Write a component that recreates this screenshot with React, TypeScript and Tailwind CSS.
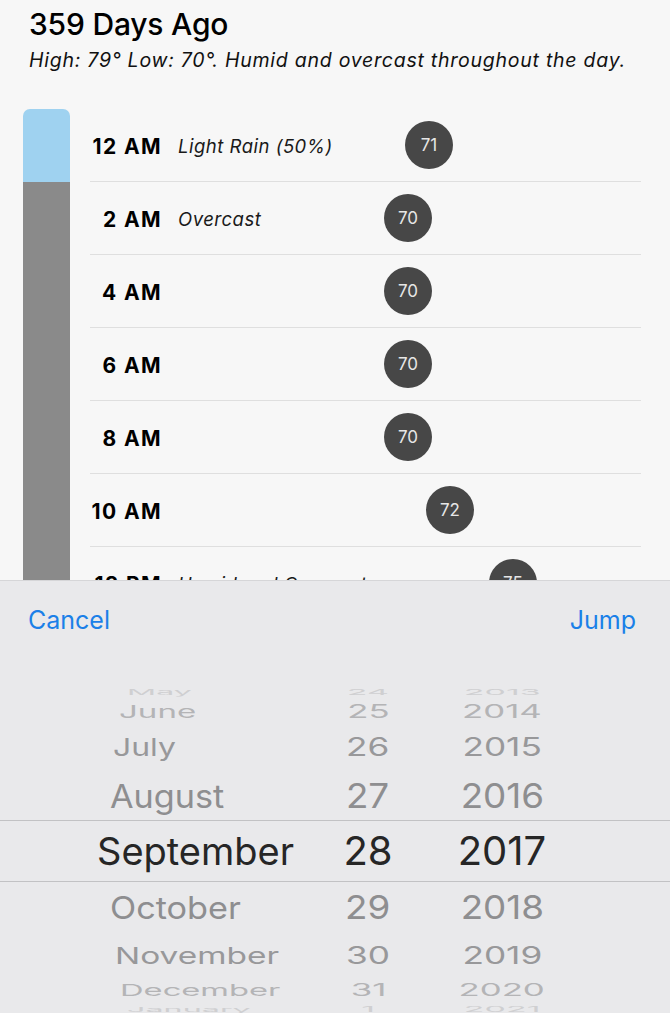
import React from "react";

type Row = { time: string; desc?: string; temp: number };

const rows: Row[] = [
  { time: "12 AM", desc: "Light Rain (50%)", temp: 71 },
  { time: "2 AM", desc: "Overcast", temp: 70 },
  { time: "4 AM", temp: 70 },
  { time: "6 AM", temp: 70 },
  { time: "8 AM", temp: 70 },
  { time: "10 AM", temp: 72 },
  { time: "12 PM", desc: "Humid and Overcast", temp: 75 },
];

type PRow = {
  m: string;
  d: string;
  y: string;
  h: string;
  ml: string;
  tf: string;
  mtf: string;
  color: string;
  sel?: boolean;
};

const picker: PRow[] = [
  { m: "May", d: "24", y: "2013", h: "h-[20px]", ml: "ml-[127px]", tf: "[transform:scale(0.85,0.2)]", mtf: "[transform:scale(0.85,0.2)]", color: "text-[#cfcfd1]" },
  { m: "June", d: "25", y: "2014", h: "h-[20px]", ml: "ml-[119px]", tf: "[transform:scale(0.87,0.45)]", mtf: "[transform:scale(0.87,0.45)]", color: "text-[#b4b4b6]" },
  { m: "July", d: "26", y: "2015", h: "h-[50px]", ml: "ml-[113px]", tf: "[transform:scale(0.88,0.64)]", mtf: "[transform:scale(0.84,0.64)]", color: "text-[#98989a]" },
  { m: "August", d: "27", y: "2016", h: "h-[48px]", ml: "ml-[110px]", tf: "[transform:scale(0.92,0.85)]", mtf: "[transform:scale(0.9,0.85)]", color: "text-[#8e8e90]" },
  { m: "September", d: "28", y: "2017", h: "h-[62px]", ml: "ml-[97px]", tf: "[transform:scale(1,1)]", mtf: "[transform:scale(1,1)]", color: "text-[#262626]", sel: true },
  { m: "October", d: "29", y: "2018", h: "h-[52px]", ml: "ml-[110px]", tf: "[transform:scale(0.92,0.82)]", mtf: "[transform:scale(0.9,0.82)]", color: "text-[#8e8e90]" },
  { m: "November", d: "30", y: "2019", h: "h-[44px]", ml: "ml-[115px]", tf: "[transform:scale(0.88,0.6)]", mtf: "[transform:scale(0.88,0.6)]", color: "text-[#98989a]" },
  { m: "December", d: "31", y: "2020", h: "h-[24px]", ml: "ml-[120px]", tf: "[transform:scale(0.87,0.42)]", mtf: "[transform:scale(0.86,0.42)]", color: "text-[#b4b4b6]" },
  { m: "January", d: "1", y: "2021", h: "h-[14px]", ml: "ml-[127px]", tf: "[transform:scale(0.85,0.18)]", mtf: "[transform:scale(0.85,0.18)]", color: "text-[#cfcfd1]" },
];

export default function App() {
  return (
    <div className="h-[1013px] w-[670px] overflow-hidden bg-[#f7f7f7] text-[#111] [font-family:Inter,'Noto_Sans',sans-serif]">
      {/* Header */}
      <div className="px-[29px]">
        <h1 className="mt-[7px] text-[30px] font-medium leading-[34px] tracking-[-0.2px] text-black">359 Days Ago</h1>
        <p className="mt-[7px] whitespace-nowrap text-[19.5px] italic leading-[24px] tracking-[0.75px] text-[#111]">
          High: 79° Low: 70°. Humid and overcast throughout the day.
        </p>
      </div>

      {/* Hourly list */}
      <div className="mt-[37px] flex h-[471px] overflow-hidden">
        <div className="ml-[23px] flex w-[47px] flex-col overflow-hidden rounded-t-[7px]">
          <div className="h-[73px] bg-[#9fd2f0]" />
          <div className="flex-1 bg-[#8a8a8a]" />
        </div>
        <div className="ml-[20px] mr-[29px] flex flex-1 flex-col">
          {rows.map((r) => (
            <div key={r.time} className="relative flex h-[73px] shrink-0 items-center border-b border-[#dfdfdf]">
              <div className="flex items-center pt-[3px]">
                <span className="-ml-[4px] w-[76px] whitespace-nowrap text-right text-[21px] font-bold tracking-[1.4px] text-black">
                  {r.time}
                </span>
                {r.desc && (
                  <span className="ml-[16px] whitespace-nowrap text-[18.5px] italic tracking-[0.5px] text-[#1a1a1a]">{r.desc}</span>
                )}
              </div>
              <div
                className="absolute top-1/2 flex h-[48px] w-[48px] -translate-y-1/2 items-center justify-center rounded-full bg-[#474747] pt-[1px] text-[17px] text-[#e6e6e6]"
                style={{ left: 294 + (r.temp - 70) * 21 }}
              >
                {r.temp}
              </div>
            </div>
          ))}
        </div>
      </div>

      {/* Bottom sheet */}
      <div className="h-[433px] border-t border-[#d6d6d8] bg-[#e9e9eb]">
        <div className="flex h-[79px] items-center justify-between px-[28px] text-[25px] text-[#1b80e8]">
          <span>Cancel</span>
          <span className="mr-[6px]">Jump</span>
        </div>
        <div className="pt-[22px]">
          {picker.map((p) => (
            <div
              key={p.m}
              className={`flex items-center text-[40px] leading-none ${p.h} ${p.color} ${
                p.sel ? "border-y border-[#c2c2c4]" : ""
              }`}
            >
              <div className="w-[328px] shrink-0">
                <span className={`inline-block origin-left text-[38px] ${p.ml} ${p.mtf}`}>{p.m}</span>
              </div>
              <div className="flex w-[80px] shrink-0 justify-center">
                <span className={`inline-block ${p.tf}`}>{p.d}</span>
              </div>
              <div className="ml-[34px] flex w-[120px] shrink-0 justify-center">
                <span className={`inline-block ${p.tf}`}>{p.y}</span>
              </div>
            </div>
          ))}
        </div>
      </div>
    </div>
  );
}
